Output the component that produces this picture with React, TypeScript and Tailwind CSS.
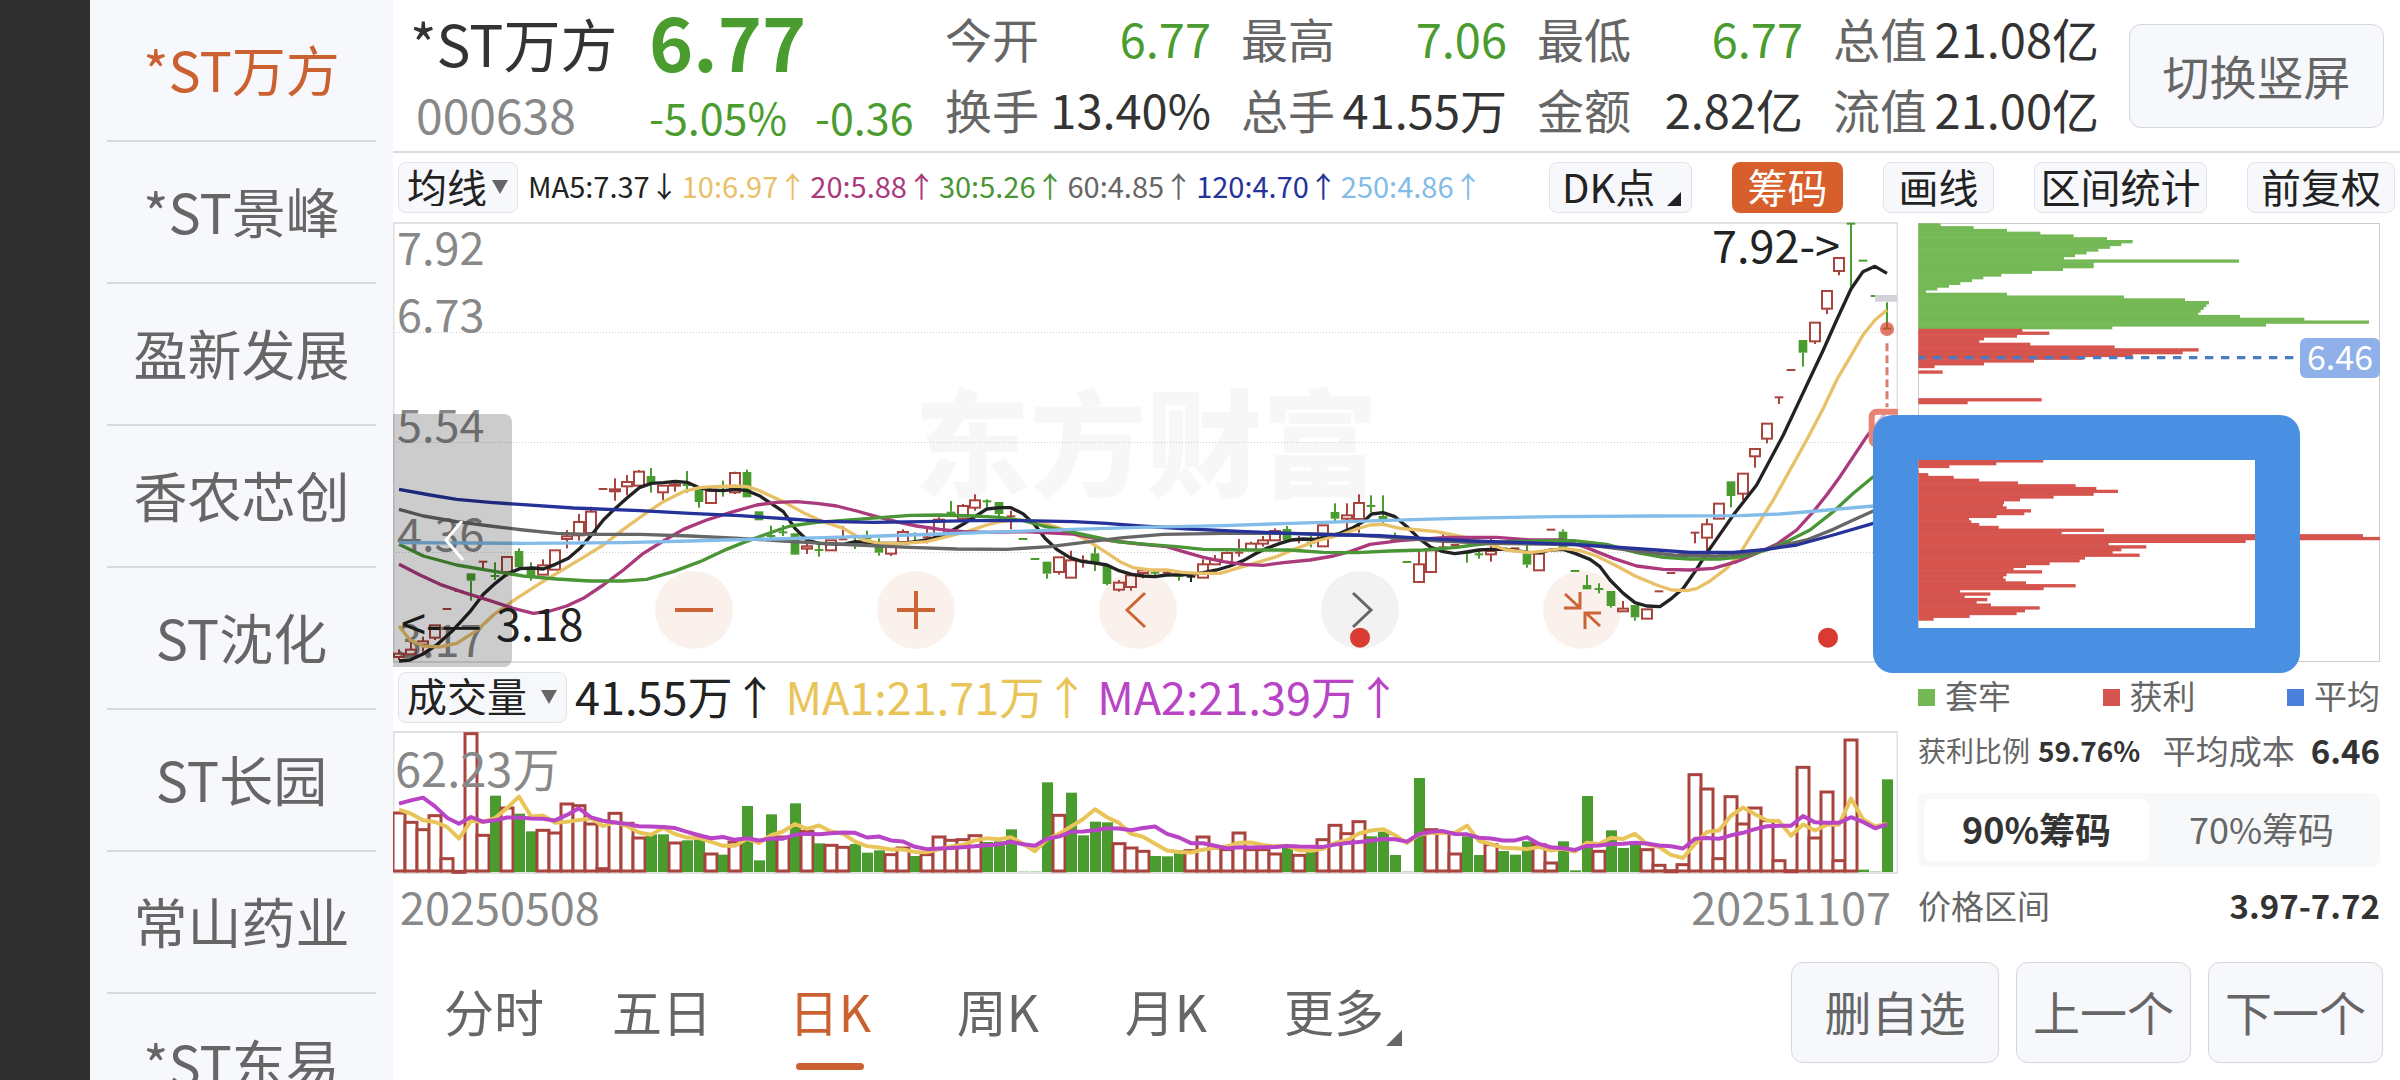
import { useState } from "react"
import clsx from "clsx"

const stocks = ["*ST万方", "*ST景峰", "盈新发展", "香农芯创", "ST沈化", "ST长园", "常山药业", "*ST东易"]

const quotes = [
  { label: "今开", value: "6.77", green: true },
  { label: "最高", value: "7.06", green: true },
  { label: "最低", value: "6.77", green: true },
  { label: "总值", value: "21.08亿" },
  { label: "换手", value: "13.40%" },
  { label: "总手", value: "41.55万" },
  { label: "金额", value: "2.82亿" },
  { label: "流值", value: "21.00亿" },
]

const maLabels = [
  { text: "MA5:7.37↓", color: "text-[#222222]" },
  { text: "10:6.97↑", color: "text-[#e8c068]" },
  { text: "20:5.88↑", color: "text-[#ab3a7d]" },
  { text: "30:5.26↑", color: "text-[#4a9536]" },
  { text: "60:4.85↑", color: "text-[#666666]" },
  { text: "120:4.70↑", color: "text-[#25329a]" },
  { text: "250:4.86↑", color: "text-[#83bce8]" },
]

const RED = "#a8433d"
const GREEN = "#4a9c2f"

// [color, high, bodyTop, bodyBottom, low], three units to a pixel
type Candle = [string, number, number, number, number]

const candles: Candle[] = [
  ["r", 1318, 1330, 1340, 1350], ["r", 1290, 1318, 1332, 1334], ["r", 1280, 1293, 1303, 1325], ["r", 1245, 1245, 1282, 1290],
  ["r", 1197, 1197, 1197, 1197], ["r", 1143, 1143, 1143, 1143], ["g", 1090, 1090, 1112, 1172], ["r", 1055, 1055, 1055, 1075],
  ["g", 1057, 1098, 1098, 1110], ["r", 1040, 1040, 1085, 1100], ["g", 1015, 1023, 1072, 1080], ["g", 1057, 1075, 1103, 1112],
  ["r", 1048, 1065, 1093, 1093], ["r", 1020, 1020, 1078, 1078], ["r", 960, 978, 986, 1015], ["r", 912, 935, 975, 992],
  ["r", 890, 904, 968, 968], ["r", 837, 837, 837, 837], ["r", 805, 837, 843, 872], ["r", 795, 815, 828, 856],
  ["r", 780, 784, 826, 826], ["g", 774, 798, 820, 848], ["r", 826, 826, 846, 870], ["r", 815, 822, 826, 845],
  ["g", 783, 825, 825, 848], ["g", 838, 838, 876, 893], ["r", 842, 842, 878, 878], ["g", 812, 842, 842, 860],
  ["r", 785, 788, 846, 852], ["g", 779, 786, 862, 862], ["g", 904, 904, 931, 931], ["g", 947, 978, 978, 990],
  ["g", 945, 967, 967, 978], ["g", 970, 970, 1034, 1034], ["r", 1000, 1008, 1015, 1032], ["g", 1005, 1020, 1020, 1040],
  ["r", 990, 990, 1020, 1020], ["r", 948, 988, 988, 988], ["g", 978, 1003, 1003, 1017], ["g", 962, 985, 985, 995],
  ["g", 985, 1005, 1028, 1037], ["r", 1010, 1010, 1030, 1038], ["r", 958, 965, 995, 995], ["g", 967, 972, 972, 993],
  ["r", 955, 982, 982, 1000], ["r", 922, 928, 975, 975], ["g", 873, 905, 920, 920], ["r", 882, 887, 925, 925],
  ["r", 853, 870, 892, 902], ["g", 868, 874, 874, 892], ["g", 876, 876, 912, 920], ["r", 902, 919, 919, 958],
  ["g", 987, 987, 987, 987], ["g", 1047, 1047, 1047, 1047], ["g", 1055, 1055, 1091, 1106], ["r", 1041, 1041, 1085, 1094],
  ["r", 1022, 1050, 1102, 1102], ["r", 1036, 1052, 1052, 1073], ["g", 1008, 1030, 1060, 1083], ["g", 1068, 1068, 1122, 1126],
  ["r", 1110, 1117, 1138, 1145], ["r", 1095, 1095, 1130, 1142], ["r", 1080, 1080, 1088, 1105], ["g", 1078, 1088, 1088, 1100],
  ["r", 1080, 1088, 1088, 1090], ["g", 1090, 1098, 1098, 1112], ["k", 1098, 1100, 1100, 1116], ["r", 1048, 1062, 1102, 1102],
  ["r", 1035, 1048, 1062, 1062], ["r", 1025, 1028, 1055, 1055], ["r", 987, 1028, 1028, 1040], ["r", 995, 1000, 1018, 1018],
  ["r", 978, 990, 1000, 1010], ["r", 955, 962, 990, 990], ["g", 948, 957, 992, 992], ["r", 978, 990, 990, 1000],
  ["g", 978, 998, 998, 1012], ["r", 945, 945, 1008, 1008], ["g", 880, 906, 926, 935], ["r", 880, 915, 925, 965],
  ["r", 853, 878, 926, 968], ["g", 856, 888, 888, 907], ["g", 856, 918, 935, 940], ["g", 968, 990, 990, 990],
  ["g", 1056, 1056, 1056, 1056], ["r", 1023, 1062, 1115, 1115], ["r", 1020, 1020, 1085, 1085], ["r", 965, 1012, 1012, 1012],
  ["r", 1005, 1005, 1005, 1005], ["g", 1028, 1028, 1028, 1058], ["g", 1022, 1033, 1033, 1046], ["r", 985, 1022, 1032, 1055],
  ["g", 1015, 1015, 1015, 1015], ["r", 1015, 1015, 1015, 1015], ["g", 1005, 1032, 1064, 1073], ["r", 1030, 1030, 1080, 1080],
  ["r", 959, 959, 959, 959], ["g", 958, 965, 1015, 1015], ["g", 1083, 1083, 1083, 1083], ["g", 1095, 1125, 1138, 1138],
  ["g", 1120, 1137, 1137, 1150], ["g", 1143, 1143, 1188, 1193], ["r", 1173, 1195, 1203, 1203], ["g", 1185, 1185, 1222, 1232],
  ["r", 1197, 1197, 1225, 1225], ["r", 1144, 1144, 1144, 1144], ["r", 1089, 1089, 1089, 1089], ["r", 1032, 1032, 1032, 1032],
  ["r", 968, 968, 968, 1000], ["r", 926, 942, 982, 1022], ["r", 880, 880, 925, 925], ["g", 814, 814, 858, 892],
  ["r", 790, 790, 850, 870], ["r", 716, 716, 738, 773], ["r", 640, 640, 685, 700], ["r", 562, 562, 562, 582],
  ["r", 480, 480, 480, 480], ["g", 390, 390, 428, 470], ["r", 337, 337, 393, 402], ["r", 242, 242, 295, 312],
  ["r", 143, 143, 182, 196], ["g", 41, 41, 41, 240], ["g", 152, 152, 152, 152], ["g", 258, 258, 258, 258],
  ["g", 277, 356, 356, 356],
]

const maLines = [
  {
    color: "#222222",
    points:
      "27,1353 60,1350 99,1332 140,1305 190,1260 240,1205 280,1153 316,1120 351,1092 390,1076 430,1074 460,1077 496,1063 535,1045 570,1015 610,968 640,930 675,896 711,864 748,833 784,820 820,818 856,814 891,817 928,833 964,840 999,842 1036,838 1072,842 1108,857 1143,880 1180,905 1215,955 1251,990 1287,1000 1360,1003 1396,995 1440,998 1470,1000 1540,1000 1610,990 1650,978 1680,965 1720,942 1755,920 1790,897 1830,893 1863,893 1900,912 1935,945 1965,985 2000,1018 2040,1043 2075,1054 2115,1059 2151,1065 2187,1082 2225,1093 2260,1098 2295,1100 2330,1095 2400,1094 2440,1088 2480,1080 2520,1068 2560,1052 2595,1032 2630,1015 2670,1000 2705,990 2740,987 2775,988 2810,980 2850,970 2885,955 2920,935 2945,912 2979,908 3015,920 3051,950 3087,985 3123,1012 3160,1025 3195,1031 3230,1026 3267,1020 3300,1018 3340,1018 3380,1022 3420,1028 3450,1028 3480,1020 3520,1018 3555,1030 3600,1048 3630,1070 3660,1110 3700,1150 3735,1178 3770,1188 3810,1190 3845,1165 3880,1135 3915,1085 3950,1030 3985,980 4030,915 4065,870 4100,825 4140,750 4180,675 4220,590 4260,505 4300,420 4340,330 4383,237 4419,185 4455,169 4491,190",
  },
  {
    color: "#e8c068",
    points:
      "27,1248 60,1290 99,1308 150,1311 200,1300 260,1262 310,1215 380,1165 450,1120 520,1078 580,1042 640,1005 700,958 760,915 820,875 880,845 928,833 970,830 1036,828 1072,830 1108,842 1180,875 1240,908 1300,935 1360,955 1420,990 1470,1000 1540,1000 1610,995 1680,978 1740,962 1790,945 1830,935 1870,930 1920,932 1980,945 2040,965 2090,990 2140,1022 2190,1055 2230,1073 2280,1080 2330,1080 2380,1087 2430,1090 2490,1090 2540,1075 2600,1058 2660,1040 2720,1015 2780,993 2850,975 2900,957 2940,945 2980,943 3030,955 3087,960 3140,965 3190,975 3240,985 3300,1003 3350,1020 3420,1028 3470,1022 3520,1015 3570,1022 3620,1038 3680,1068 3740,1100 3800,1125 3845,1140 3890,1142 3920,1136 3960,1113 4010,1075 4050,1030 4100,950 4150,870 4200,780 4250,690 4300,595 4340,510 4383,437 4419,375 4455,330 4491,300",
  },
  {
    color: "#ab3a7d",
    points:
      "27,1063 90,1095 150,1123 220,1147 300,1172 370,1195 430,1210 480,1203 530,1188 580,1165 640,1125 700,1080 760,1030 820,993 880,958 950,930 1030,905 1100,885 1160,877 1220,875 1280,880 1340,888 1400,903 1460,920 1530,938 1580,948 1650,958 1720,965 1800,967 1900,965 1960,968 2050,972 2100,982 2170,993 2250,1002 2330,1010 2380,1025 2440,1042 2500,1055 2560,1063 2620,1066 2680,1058 2760,1050 2830,1038 2880,1025 2940,1003 3030,992 3170,982 3320,982 3420,990 3520,990 3590,1013 3670,1045 3740,1068 3820,1078 3900,1080 3970,1075 4040,1055 4100,1030 4160,1003 4220,960 4270,905 4310,855 4350,800 4390,740 4430,680 4470,630 4491,603",
  },
  {
    color: "#4a9536",
    points:
      "27,1003 100,1038 200,1065 300,1082 400,1098 500,1107 600,1113 700,1113 770,1108 850,1085 930,1055 1000,1022 1060,998 1130,972 1200,948 1280,937 1400,928 1480,922 1560,916 1650,915 1750,918 1830,922 1900,932 1960,948 2040,965 2100,978 2180,995 2270,1003 2360,1010 2440,1018 2580,1020 2700,1020 2800,1027 2900,1028 3000,1023 3100,1020 3200,1012 3250,1005 3350,995 3450,993 3550,992 3650,1003 3740,1028 3820,1042 3900,1047 3990,1047 4060,1040 4130,1020 4190,995 4260,960 4330,905 4390,850 4450,800 4491,770",
  },
  {
    color: "#666666",
    points:
      "27,898 100,918 200,935 300,948 400,960 500,970 600,973 750,973 900,978 1050,985 1180,993 1300,1000 1400,1005 1560,1012 1700,1017 1850,1018 1980,1010 2100,995 2200,983 2320,973 2500,970 2700,970 2900,975 3000,982 3150,993 3300,1000 3500,1003 3600,1005 3750,1025 3850,1035 3980,1038 4080,1030 4160,1010 4250,990 4330,958 4390,930 4450,903 4491,888",
  },
  {
    color: "#25329a",
    points:
      "27,838 120,855 200,868 300,877 400,884 550,894 750,902 900,910 1050,917 1200,927 1300,934 1450,937 1600,935 1750,932 1900,932 2050,935 2150,940 2250,948 2400,957 2550,964 2700,970 2850,975 2970,977 3100,985 3250,993 3400,998 3550,1003 3700,1013 3800,1020 3900,1027 4030,1027 4130,1018 4220,1005 4330,975 4450,940 4491,930",
  },
  {
    color: "#83bce8",
    points:
      "27,998 400,1000 700,998 900,993 1000,990 1150,987 1300,983 1470,978 1650,972 1850,965 2050,958 2250,952 2500,947 2700,940 2970,932 3200,925 3500,920 3800,918 4050,917 4170,912 4280,903 4450,888 4491,885",
  },
]

// volume bars, negative = down day
const volumes = [
  180, 152, 130, 172, 43, 5, 418, 113, -229, 195, -175, -122, 128, 120, 207, 202, 147, 13, 179, 149, 105, -113, -113, 90, -95,
  -98, 57, -52, 93, -198, -35, -173, 108, -206, 125, -86, 83, 77, -84, -58, -65, 55, 75, -48, 55, 108, 98, 100, 112, -90, -92,
  -128, -1, -1, -269, 173, -238, -110, -151, -149, 88, 75, 65, -48, -47, -65, 67, 108, 75, 70, 120, 70, 70, 57, -75, 53, -63,
  100, 143, 118, 154, -107, -121, -51, -1, -282, 130, 120, 57, -107, -51, 85, -63, -52, -92, 85, 30, -92, -5, -228, 65, -125,
  -72, -85, 70, 23, 7, 25, 295, 252, 43, 229, 147, 195, 157, 37, 7, 317, 105, 243, 37, 399, -7, -1, -278,
]

const ma5Head = [187, 175, 155, 150]
const ma10Head = [205, 215, 223, 197, 163, 145, 165, 151, 155]

function volumeAverage(days: number, head: number[]) {
  return volumes
    .map((_, i) => {
      const slice = volumes.slice(Math.max(0, i - days + 1), i + 1)
      const avg = i < head.length ? head[i] : slice.reduce((sum, v) => sum + Math.abs(v), 0) / days
      return `${6 + 12 * i},${141 - avg / 3}`
    })
    .join(" ")
}

// cost distribution, right end of every row
const chips = [
  {
    start: 0,
    color: "#75b856",
    ends: [
      182, 281, 381, 481, 581, 681, 758, 724, 690, 655, 620, 585, 552, 1077, 641, 641, 549, 456, 364, 310, 276, 241, 207, 172,
      138, 381, 732, 915, 987, 979, 971, 962, 955, 1080, 1273, 1467, 1158, 697,
    ],
  },
  {
    start: 38,
    color: "#d6544e",
    ends: [427, 508, 411, 312, 298, 451, 704, 956, 908, 758, 610, 462, 312, 164, 115, 188],
  },
  { start: 63, color: "#d6544e", ends: [485, 263] },
  {
    start: 85,
    color: "#d6544e",
    ends: [
      490, 349, 208, 115, 117, 145, 221, 297, 414, 587, 649, 714, 641, 521, 420, 372, 369, 380, 453, 433, 350, 267, 274, 298,
      356, 672, 545, 1449, 1500, 1097, 686, 799, 724, 698, 779, 615, 599, 509, 438, 401, 486, 380, 370, 377, 438, 587, 491, 240,
      331, 254, 322, 290, 333, 479, 435, 410, 269, 161,
    ],
  },
]

const legend = [
  { label: "套牢", color: "bg-[#75b856]" },
  { label: "获利", color: "bg-[#d6544e]" },
  { label: "平均", color: "bg-[#4a7fdc]" },
]

const periods = ["分时", "五日", "日K", "周K", "月K", "更多"]

const toolButton = "h-[51px] rounded-lg border border-[#e1e3e6] bg-[#f7f8fb] pb-1 text-[40px] leading-none text-[#222222]"
const bigButton = "rounded-xl border border-[#d5d7da] bg-[#f7f8fb] pb-1 text-[47px] leading-none text-[#666666]"
const roundButton = "flex size-[78px] items-center justify-center rounded-full bg-[#fbf1ec] text-[#cb6536]"

function CornerMark({ className }: { className: string }) {
  return (
    <svg className={className} viewBox="0 0 14 14" fill="currentColor">
      <path d="M14 0V14H0Z" />
    </svg>
  )
}

function DropDown({ label, options, className }: { label: string; options: string[]; className: string }) {
  return (
    <div className="relative">
      <select aria-label={label} className={clsx(toolButton, "block appearance-none pl-2", className)}>
        {options.map((option) => (
          <option key={option}>{option}</option>
        ))}
      </select>
      <svg className="pointer-events-none absolute top-[18px] right-2.5 h-3.5 w-4 text-[#666666]" viewBox="0 0 16 14" fill="currentColor">
        <path d="M0 0H16L8 14Z" />
      </svg>
    </div>
  )
}

function CandleMark({ candle, x }: { candle: Candle; x: number }) {
  const [type, high, top, bottom, low] = candle
  const color = type === "r" ? RED : type === "g" ? GREEN : "#222222"
  const flat = bottom - top < 4
  return (
    <g stroke={color} strokeWidth="6" fill="none">
      {high < top && <path d={`M${x} ${high}V${top}`} />}
      {low > bottom && <path d={`M${x} ${bottom}V${low}`} />}
      {flat && <path d={`M${x - 13} ${top}H${x + 13}`} />}
      {!flat && type === "r" && <rect x={x - 15} y={top + 1} width="30" height={bottom - top} />}
      {!flat && type === "g" && <rect x={x - 13} y={top} width="26" height={bottom - top} fill={color} stroke="none" />}
    </g>
  )
}

function PriceChart() {
  return (
    <div className="relative">
      {/* chart controls */}
      <div className="absolute inset-x-0 bottom-[14px] flex gap-36 pl-[262px]">
        <button aria-label="缩小" className={roundButton}>
          <svg className="size-[38px]" viewBox="0 0 38 38" stroke="currentColor" strokeWidth="4">
            <path d="M0 19H38" />
          </svg>
        </button>
        <button aria-label="放大" className={roundButton}>
          <svg className="size-[38px]" viewBox="0 0 38 38" stroke="currentColor" strokeWidth="4">
            <path d="M0 19H38M19 0V38" />
          </svg>
        </button>
        <button aria-label="左移" className={roundButton}>
          <svg className="size-[38px]" viewBox="0 0 38 38" fill="none" stroke="currentColor" strokeWidth="3">
            <path d="M26 2L8 19L26 36" />
          </svg>
        </button>
        <button aria-label="右移" className="flex size-[78px] items-center justify-center rounded-full bg-[#f2f2f2] text-[#666666]">
          <svg className="size-[38px]" viewBox="0 0 38 38" fill="none" stroke="currentColor" strokeWidth="3">
            <path d="M12 2L30 19L12 36" />
          </svg>
        </button>
        <button aria-label="收起" className={roundButton}>
          <svg className="size-[38px]" viewBox="0 0 38 38" fill="none" stroke="currentColor" strokeWidth="3">
            <path d="M2 3L16 16M17 1V17H1M37 35L23 22M22 38V22H38" />
          </svg>
        </button>
      </div>

      <svg className="pointer-events-none relative block w-full" viewBox="0 0 1505 441">
        <text x="521" y="266" fontSize="116" fontWeight="900" fill="#f7f7f7">东方财富</text>
        <path d="M0 110.5H1504M0 220.5H1504M0 330.5H1504" stroke="#cfcfcf" strokeDasharray="1 2" />
        <rect x="0.5" y="1" width="1504" height="439" fill="none" stroke="#e0e0e0" strokeWidth="2" />

        <g fontSize="45" fill="#888888">
          <text x="4" y="43">7.92</text>
          <text x="4" y="110">6.73</text>
          <text x="4" y="220">5.54</text>
          <text x="4" y="329">4.36</text>
          <text x="4" y="435">3.17</text>
        </g>

        <g transform="translate(-3 -12) scale(0.33333)">
          {candles.map((candle, i) => (
            <CandleMark key={i} candle={candle} x={27 + 36 * i} />
          ))}
          {maLines.map((line) => (
            <polyline key={line.color} points={line.points} fill="none" stroke={line.color} strokeWidth="10" strokeLinejoin="round" />
          ))}
          <rect x="4455" y="255" width="66" height="20" fill="#d0d3d8" />
          <circle cx="4491" cy="357" r="21" fill="#d9402b" fillOpacity="0.7" />
          <path d="M4491 400V592" stroke="#d9806f" strokeWidth="9" strokeDasharray="24 12" />
          <rect x="4445" y="605" width="100" height="100" rx="16" fill="#ffffff" fillOpacity="0.6" stroke="#e88474" strokeWidth="18" />
          <circle cx="2910" cy="1283" r="30" fill="#d93a32" />
          <circle cx="4314" cy="1283" r="30" fill="#d93a32" />
        </g>

        <g fontSize="45" fill="#222222">
          <text x="8" y="419">&lt;-—</text>
          <text x="103" y="419">3.18</text>
          <text x="1319" y="41">7.92-&gt;</text>
        </g>
      </svg>

      <button
        aria-label="更早"
        className="absolute -bottom-1 left-0 flex h-[253px] w-[119px] items-center justify-center rounded-r-lg bg-black/20"
      >
        <svg className="size-10" viewBox="0 0 40 40" fill="none" stroke="#ffffff" strokeWidth="3">
          <path d="M29 0L13 19L30 39" />
        </svg>
      </button>
    </div>
  )
}

function VolumeChart() {
  return (
    <svg className="block w-full" viewBox="0 0 1505 143">
      <rect x="0.5" y="1" width="1504" height="141" fill="none" stroke="#e0e0e0" strokeWidth="2" />
      {volumes.map((v, i) => {
        const height = Math.abs(v) / 3
        return v < 0 ? (
          <rect key={i} x={1 + 12 * i} y={141 - height} width="11" height={height} fill={GREEN} />
        ) : (
          <rect key={i} x={12 * i} y={142 - height} width="12" height={Math.max(height - 2, 1)} fill="#ffffff" stroke={RED} strokeWidth="3" />
        )
      })}
      <text x="2" y="56" fontSize="47" fill="#888888">62.23万</text>
      <g fill="none" strokeWidth="4" strokeLinejoin="round">
        <polyline points={volumeAverage(5, ma5Head)} stroke="#e9c559" />
        <polyline points={volumeAverage(10, ma10Head)} stroke="#b944c6" />
      </g>
    </svg>
  )
}

function ChipChart() {
  return (
    <div className="relative">
      <svg className="block w-full" viewBox="0 0 462 441">
        <rect x="0.5" y="1.5" width="461" height="438" fill="none" stroke="#cccccc" />
        <g transform="translate(-38 -12) scale(0.33333)">
          {chips.map((group) =>
            group.ends.map((end, i) => (
              <rect
                key={`${group.start}-${i}`}
                x="115"
                y={40 + (group.start + i) * 8.325}
                width={end - 115}
                height="10"
                fill={group.color}
              />
            ))
          )}
          <path d="M115 443H1242" stroke="#4a7cc4" strokeWidth="10" strokeDasharray="25 23" strokeDashoffset="4" />
        </g>
      </svg>
      <span className="absolute top-[116px] right-0 flex h-10 w-20 items-center justify-center rounded-md bg-[#8fb0e8] pb-1 text-[34px] leading-none text-white">
        6.46
      </span>
      {/* highlighted range */}
      <div className="absolute top-[193px] -left-[45px] h-[258px] w-[427px] rounded-[20px] border-[45px] border-[#4990e2]" />
    </div>
  )
}

export default function App() {
  const [stock, setStock] = useState(0)
  const [period, setPeriod] = useState("日K")
  const [chipRange, setChipRange] = useState("90%筹码")

  return (
    <div className="flex h-screen overflow-hidden bg-white font-['Noto_Sans_CJK_SC',sans-serif]">
      <div className="w-[90px] shrink-0 bg-[#303030]" />

      <nav className="w-[303px] shrink-0 bg-[#f7f8fb] px-[17px]">
        {stocks.map((name, i) => (
          <a
            key={name}
            href="#"
            onClick={() => setStock(i)}
            className={clsx(
              "flex h-[142px] items-center justify-center border-b-2 border-[#d8dadc] pb-0.5 text-[54px] leading-none",
              i === stock ? "text-[#cb6130]" : "text-[#666666]"
            )}
          >
            {name}
          </a>
        ))}
      </nav>

      <main className="flex min-w-0 flex-1 flex-col">
        {/* quote */}
        <header className="flex h-[153px] shrink-0 justify-between border-b-2 border-[#dcdcdc] pr-4 pl-[17px]">
          <div className="flex">
            <div className="flex w-[239px] flex-col gap-[18px] pt-3.5">
              <h1 className="text-[57px] leading-none whitespace-nowrap text-[#333333]">*ST万方</h1>
              <span className="pl-1.5 text-[48px] leading-none text-[#888888]">000638</span>
            </div>
            <div className="flex flex-col gap-[18px] pt-0.5 text-[#4a9c2f]">
              <strong className="text-[75px] leading-none font-bold">6.77</strong>
              <div className="flex gap-7 text-[43px] leading-none">
                <span>-5.05%</span>
                <span>-0.36</span>
              </div>
            </div>
          </div>
          <div className="flex">
            <dl className="grid grid-cols-4 content-start gap-x-[30px] gap-y-6 pt-3.5 pr-[30px]">
              {quotes.map((quote) => (
                <div key={quote.label} className="flex w-[266px] items-center justify-between text-[47px] leading-none">
                  <dt className="text-[#666666]">{quote.label}</dt>
                  <dd className={quote.green ? "text-[#4a9c2f]" : "text-[#333333]"}>{quote.value}</dd>
                </div>
              ))}
            </dl>
            <button className={clsx(bigButton, "mt-6 h-[104px] w-[255px]")}>切换竖屏</button>
          </div>
        </header>

        {/* toolbar */}
        <div className="flex h-[69px] shrink-0 items-center justify-between px-[5px]">
          <div className="flex items-center gap-2.5">
            <DropDown label="指标" options={["均线"]} className="w-[120px]" />
            <p className="flex gap-[3px] pb-1 text-[29px] leading-none">
              {maLabels.map((ma) => (
                <span key={ma.text} className={ma.color}>{ma.text}</span>
              ))}
            </p>
          </div>
          <div className="flex gap-10">
            <button aria-haspopup="menu" className={clsx(toolButton, "flex w-[143px] items-center pl-3")}>
              DK点
              <CornerMark className="mb-0.5 ml-3 size-3.5 self-end" />
            </button>
            <button className="h-[51px] w-[111px] rounded-lg bg-[#d65f2b] pb-1 text-[40px] leading-none text-white">筹码</button>
            <button className={clsx(toolButton, "w-[111px]")}>画线</button>
            <button className={clsx(toolButton, "w-[173px]")}>区间统计</button>
            <button className={clsx(toolButton, "w-[148px]")}>前复权</button>
          </div>
        </div>

        <div className="flex">
          <section className="min-w-0 flex-1">
            <PriceChart />
            <div className="flex h-[68px] items-center gap-2 pl-[5px] text-[45px] leading-none">
              <DropDown label="副图" options={["成交量"]} className="w-[169px]" />
              <span className="pb-1 text-[#222222]">41.55万↑</span>
              <span className="pb-1 text-[#e9c559]">MA1:21.71万↑</span>
              <span className="pb-1 text-[#b944c6]">MA2:21.39万↑</span>
            </div>
            <VolumeChart />
            <div className="flex justify-between px-[7px] pt-[9px] text-[45px] leading-none text-[#888888]">
              <span>20250508</span>
              <span>20251107</span>
            </div>
          </section>

          <aside className="mx-5 w-[462px] shrink-0">
            <ChipChart />
            <ul className="flex h-[68px] items-center justify-between text-[33px] leading-none text-[#666666]">
              {legend.map((item) => (
                <li key={item.label} className="flex items-center gap-2.5">
                  <i className={clsx("size-[17px]", item.color)} />
                  <span className="pb-1">{item.label}</span>
                </li>
              ))}
            </ul>
            <dl className="flex h-[40px] items-center justify-between pb-0.5 text-[33px] leading-none text-[#666666]">
              <div className="flex items-center gap-2 text-[28px]">
                <dt>获利比例</dt>
                <dd className="font-bold text-[#333333]">59.76%</dd>
              </div>
              <div className="flex items-center gap-4">
                <dt>平均成本</dt>
                <dd className="font-bold text-[#333333]">6.46</dd>
              </div>
            </dl>
            <div className="mt-[22px] grid h-[74px] grid-cols-2 rounded-lg bg-[#f7f8fa] p-1.5">
              {["90%筹码", "70%筹码"].map((item) => (
                <button
                  key={item}
                  onClick={() => setChipRange(item)}
                  className={clsx(
                    "rounded-lg pb-1 text-[36px] leading-none",
                    item === chipRange ? "bg-white font-bold text-[#333333]" : "text-[#666666]"
                  )}
                >
                  {item}
                </button>
              ))}
            </div>
            <dl className="flex h-20 items-center justify-between pb-1 text-[33px] leading-none">
              <dt className="text-[#666666]">价格区间</dt>
              <dd className="font-bold text-[#333333]">3.97-7.72</dd>
            </dl>
          </aside>
        </div>

        {/* periods */}
        <footer className="flex items-start justify-between px-[17px] pt-[15px]">
          <div className="flex">
            {periods.map((item) => (
              <button
                key={item}
                onClick={() => setPeriod(item)}
                className={clsx(
                  "relative flex h-[101px] w-[168px] items-center justify-center pb-1.5 text-[50px] leading-none",
                  item === period ? "text-[#cb6130]" : "text-[#666666]"
                )}
              >
                {item}
                {item === period && <span className="absolute -bottom-[7px] h-[7px] w-[68px] rounded-full bg-[#cb6130]" />}
                {item === "更多" && <CornerMark className="absolute right-4 bottom-[17px] size-4" />}
              </button>
            ))}
          </div>
          <div className="flex gap-[17px]">
            <button className={clsx(bigButton, "h-[101px] w-[208px]")}>删自选</button>
            <button className={clsx(bigButton, "h-[101px] w-[175px]")}>上一个</button>
            <button className={clsx(bigButton, "h-[101px] w-[175px]")}>下一个</button>
          </div>
        </footer>
      </main>
    </div>
  )
}
